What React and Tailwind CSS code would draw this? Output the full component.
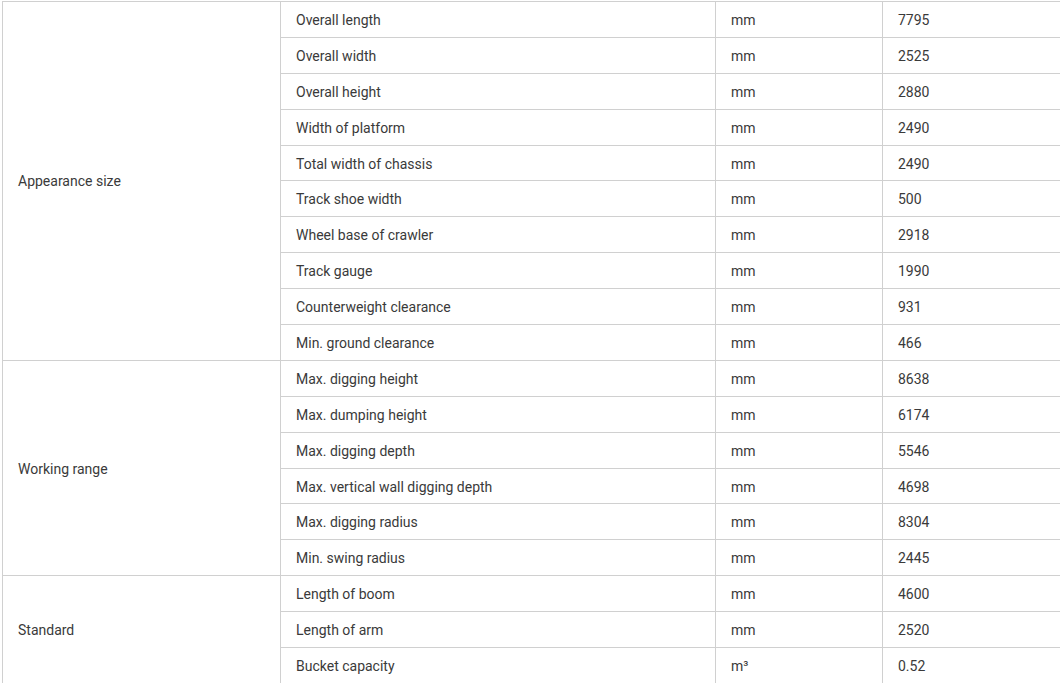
const groups = [
  {
    name: "Appearance size",
    rows: [
      ["Overall length", "mm", "7795"],
      ["Overall width", "mm", "2525"],
      ["Overall height", "mm", "2880"],
      ["Width of platform", "mm", "2490"],
      ["Total width of chassis", "mm", "2490"],
      ["Track shoe width", "mm", "500"],
      ["Wheel base of crawler", "mm", "2918"],
      ["Track gauge", "mm", "1990"],
      ["Counterweight clearance", "mm", "931"],
      ["Min. ground clearance", "mm", "466"],
    ],
  },
  {
    name: "Working range",
    rows: [
      ["Max. digging height", "mm", "8638"],
      ["Max. dumping height", "mm", "6174"],
      ["Max. digging depth", "mm", "5546"],
      ["Max. vertical wall digging depth", "mm", "4698"],
      ["Max. digging radius", "mm", "8304"],
      ["Min. swing radius", "mm", "2445"],
    ],
  },
  {
    name: "Standard",
    rows: [
      ["Length of boom", "mm", "4600"],
      ["Length of arm", "mm", "2520"],
      ["Bucket capacity", "m³", "0.52"],
    ],
  },
];

const cell = "border border-[#d0d0d0] px-[15px] pt-[2px] h-[35.9px] align-middle";

export default function App() {
  return (
    <div className="bg-white w-[1060px] h-[683px] overflow-hidden pl-[2px] pt-[1px] font-['Roboto',sans-serif] text-[14px] text-[#3a3a3a]">
      <table className="border-collapse table-fixed w-[1058px]">
        <colgroup>
          <col className="w-[278px]" />
          <col className="w-[435px]" />
          <col className="w-[167px]" />
          <col className="w-[178px]" />
        </colgroup>
        <tbody>
          {groups.map((g) =>
            g.rows.map((r, i) => (
              <tr key={g.name + i}>
                {i === 0 && (
                  <td rowSpan={g.rows.length} className={cell}>
                    {g.name}
                  </td>
                )}
                <td className={cell}>{r[0]}</td>
                <td className={cell}>{r[1]}</td>
                <td className={cell}>{r[2]}</td>
              </tr>
            ))
          )}
        </tbody>
      </table>
    </div>
  );
}
